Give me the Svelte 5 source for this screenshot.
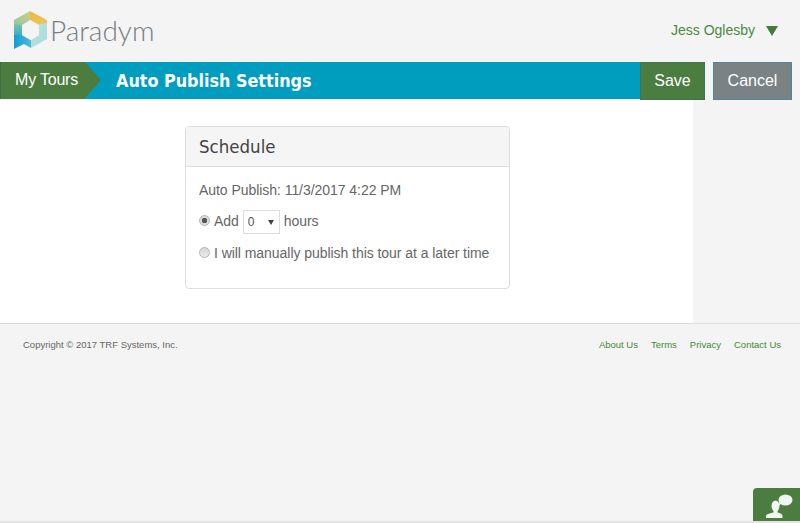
<script lang="ts">
  // Auto publish settings page for a tour
  const links = ["About Us", "Terms", "Privacy", "Contact Us"];
  let hours = $state("0");
  let mode = $state("add");
</script>

<div class="page">
  <header class="top">
    <div class="brand">
      <svg class="logo" width="33" height="38" viewBox="0 0 33 38">
        <defs>
          <linearGradient id="gold" x1="0" y1="0" x2="1" y2="1">
            <stop offset="0" stop-color="#efb93f" />
            <stop offset="1" stop-color="#e9c765" />
          </linearGradient>
          <linearGradient id="leaf" x1="1" y1="0" x2="0" y2="1">
            <stop offset="0" stop-color="#d3cf86" />
            <stop offset="1" stop-color="#8fc6a0" />
          </linearGradient>
          <linearGradient id="sea" x1="0" y1="0" x2="0" y2="1">
            <stop offset="0" stop-color="#78c4ab" />
            <stop offset="1" stop-color="#2ba6cf" />
          </linearGradient>
          <linearGradient id="sky" x1="0" y1="0" x2="1" y2="1">
            <stop offset="0" stop-color="#bfe3c8" />
            <stop offset="1" stop-color="#a3dcef" />
          </linearGradient>
          <linearGradient id="deep" x1="0" y1="0" x2="1" y2="0">
            <stop offset="0" stop-color="#129dcf" />
            <stop offset="1" stop-color="#4fbade" />
          </linearGradient>
        </defs>
        <polygon points="16,0 33,9 33,14 24,14 16,9" fill="url(#gold)" />
        <polygon points="16,0 0,9 0,15 8,15 16,9" fill="url(#leaf)" />
        <polygon points="0,13 8,14 8,24 0,28" fill="url(#sea)" />
        <polygon points="33,12 33,28 17,37 17,29 25,24 25,13" fill="url(#sky)" />
        <polygon points="0,24 8,24 17,29 17,37 10,33 0,38" fill="url(#deep)" />
        <polygon points="16.500,9 25,14 25,24 16.500,29 8,24 8,14" fill="#f4f4f4" />
      </svg>
      <span class="wordmark">Paradym</span>
    </div>
    <div class="user">
      <span>Jess Oglesby</span>
      <span class="caret"></span>
    </div>
  </header>

  <div class="toolbar">
    <div class="bar">
      <a class="crumb" href="#tours">My Tours</a>
      <h1>Auto Publish Settings</h1>
    </div>
    <button class="btn save">Save</button>
    <button class="btn cancel">Cancel</button>
  </div>

  <main class="content">
    <section class="panel">
      <h2>Schedule</h2>
      <div class="panel-body">
        <p class="when">Auto Publish: 11/3/2017 4:22 PM</p>
        <label class="row add">
          <input type="radio" name="mode" value="add" bind:group={mode} />
          <span>Add</span>
          <span class="select">
            <select bind:value={hours}>
              {#each [0, 1, 2, 3, 4, 6, 8, 12, 24] as h}
                <option value={String(h)}>{h}</option>
              {/each}
            </select>
          </span>
          <span>hours</span>
        </label>
        <label class="row">
          <input type="radio" name="mode" value="manual" bind:group={mode} />
          <span>I will manually publish this tour at a later time</span>
        </label>
      </div>
    </section>
  </main>

  <footer class="foot">
    <span>Copyright © 2017 TRF Systems, Inc.</span>
    <nav>
      {#each links as link}
        <a href="#{link}">{link}</a>
      {/each}
    </nav>
  </footer>

  <div class="strip"></div>

  <button class="help" aria-label="Help">
    <svg width="28" height="25" viewBox="0 -1.500 28 25">
      <ellipse cx="19.500" cy="5.500" rx="7" ry="5.500" fill="#f2f6f1" />
      <polygon points="14,6 16,9 12.500,11" fill="#f2f6f1" />
      <ellipse cx="9.500" cy="11.500" rx="4" ry="5.500" fill="#f2f6f1" />
      <path d="M7.500 15h4v3c2.800.8 5 1.600 5 3.200v2.300H0v-2.300C0 19.600 4.700 18.800 7.500 18z" fill="#f2f6f1" />
    </svg>
  </button>
</div>

<style>
  :global(body) {
    margin: 0;
    background: #f4f4f4;
    font-family: "Liberation Sans", Arial, sans-serif;
    color: #666;
  }

  .page {
    position: relative;
    height: 523px;
    overflow: hidden;
  }

  .top {
    height: 62px;
    box-sizing: border-box;
    display: flex;
    justify-content: space-between;
    align-items: flex-start;
    padding: 0 22px 0 14px;
  }

  .brand { display: flex; align-items: center; padding-top: 11px; }
  .logo { display: block; }
  .wordmark {
    font-family: Lato, sans-serif;
    font-weight: 300;
    font-size: 28px;
    line-height: 38px;
    color: #777e83;
    margin-left: 3px;
  }

  .user {
    display: flex;
    align-items: center;
    gap: 11px;
    padding-top: 22px;
    font-size: 14px;
    line-height: 17px;
    color: #4a8a3f;
  }
  .caret {
    width: 0;
    height: 0;
    border-left: 6.5px solid transparent;
    border-right: 6.5px solid transparent;
    border-top: 10px solid #467a3c;
  }

  .toolbar { display: flex; height: 38px; }

  .bar {
    width: 640px;
    height: 37px;
    background: #009dbf;
    display: flex;
    align-items: center;
  }

  .crumb {
    position: relative;
    width: 85px;
    height: 37px;
    box-sizing: border-box;
    background: #4a7d3f;
    border-left: 1px solid #3f6d48;
    color: #fff;
    text-decoration: none;
    font-size: 16px;
    line-height: 36px;
    padding-left: 14px;
    letter-spacing: -0.2px;
  }
  .crumb::after {
    content: "";
    position: absolute;
    left: 100%;
    top: 0;
    border-left: 16px solid #4a7d3f;
    border-top: 18.5px solid transparent;
    border-bottom: 18.5px solid transparent;
  }

  h1 {
    margin: 0 0 0 31px;
    font-family: "DejaVu Sans", Verdana, sans-serif;
    font-stretch: condensed;
    font-weight: 700;
    font-size: 17.800px;
    color: #fff;
  }

  .btn {
    height: 38px;
    padding: 0;
    color: #fff;
    font-family: "Liberation Sans", Arial, sans-serif;
    font-size: 16px;
    box-sizing: border-box;
  }
  .save {
    width: 65px;
    background: #4a7d3f;
    border: 1px solid #3f7458;
  }
  .cancel {
    width: 79px;
    margin-left: 8px;
    background: #7b8285;
    border: 1px solid #4f8794;
  }

  .content {
    width: 693px;
    height: 223px;
    box-sizing: border-box;
    background: #fff;
    padding: 26px 0 0 185px;
  }

  .panel {
    width: 325px;
    height: 163px;
    box-sizing: border-box;
    border: 1px solid #ddd;
    border-radius: 4px;
    overflow: hidden;
  }

  h2 {
    margin: 0;
    height: 40px;
    box-sizing: border-box;
    background: #f5f5f5;
    border-bottom: 1px solid #ddd;
    padding-left: 13px;
    font-family: "DejaVu Sans", Verdana, sans-serif;
    font-stretch: condensed;
    font-weight: 400;
    font-size: 18.500px;
    line-height: 40px;
    color: #444;
  }

  .panel-body {
    padding: 15px 13px 0;
    font-size: 14px;
    line-height: 17px;
    letter-spacing: -0.05px;
  }

  .when { margin: 0 0 9px; }

  .row {
    display: flex;
    align-items: center;
    height: 24px;
    gap: 4px;
    margin-bottom: 8px;
  }
  .row.add { height: 26px; margin-bottom: 7px; }

  input[type="radio"] {
    appearance: none;
    margin: 0;
    width: 11px;
    height: 11px;
    box-sizing: border-box;
    border: 1px solid #b4b4b4;
    border-radius: 50%;
    background: linear-gradient(#d4d4d4, #ececec);
    position: relative;
    top: -1px;
  }
  input[type="radio"]:checked {
    background: radial-gradient(circle, #555 0 2.500px, #dcdcdc 3px);
  }

  .select { display: block; position: relative; height: 24px; margin-top: 2px; }
  .select::after {
    content: "";
    position: absolute;
    right: 6px;
    top: 10px;
    border-left: 3px solid transparent;
    border-right: 3px solid transparent;
    border-top: 5px solid #444;
    pointer-events: none;
  }
  select {
    appearance: none;
    width: 37px;
    height: 24px;
    border: 1px solid #ddd;
    background: #fff;
    color: #555;
    font-family: "Liberation Sans", Arial, sans-serif;
    font-size: 12px;
    padding: 0 0 0 4px;
    display: block;
  }

  .foot {
    border-top: 1px solid #dcdcdc;
    display: flex;
    justify-content: space-between;
    padding: 15px 19px 0 23px;
    font-size: 9.500px;
    line-height: 12px;
    color: #666;
  }
  .foot nav { display: flex; gap: 13px; }
  .foot a { color: #3f8a35; text-decoration: none; }

  .strip {
    position: absolute;
    left: 0;
    right: 0;
    bottom: 0;
    height: 2px;
    background: #e4e4e4;
  }

  .help {
    position: absolute;
    right: 0;
    bottom: 2px;
    width: 47px;
    height: 33px;
    box-sizing: border-box;
    border: 0;
    padding: 0 0 3px 13px;
    background: #4a7d3f;
    border-radius: 4px 0 0 0;
    display: flex;
    align-items: flex-end;
  }
</style>
